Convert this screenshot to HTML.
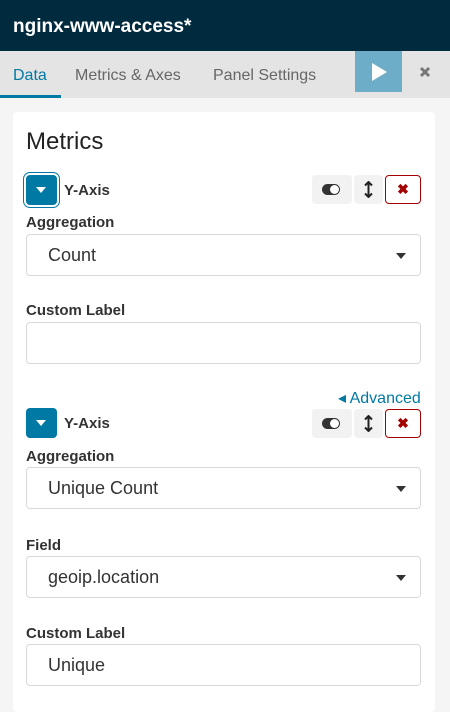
<!DOCTYPE html>
<html><head><style>
*{box-sizing:border-box;margin:0;padding:0}
body{width:450px;height:691px;overflow:hidden;background:#f5f5f5;font-family:"Liberation Sans",sans-serif;position:relative;color:#2d2d2d}
.a{position:absolute}
.hdr{left:0;top:0;width:450px;height:51px;background:#002b3f;color:#fff;font-weight:bold;font-size:19px;padding:16px 0 0 13px}
.tabs{left:0;top:51px;width:450px;height:47px;background:#e4e4e4}
.tab{top:16px;font-size:16px;color:#666}
.panel{left:13px;top:112px;width:422px;height:600px;background:#fff;border-radius:4px}
.lbl{font-weight:bold;font-size:15px;color:#333;left:26px}
.sel{left:26px;width:395px;height:42px;border:1px solid #d9d9d9;border-radius:4px;font-size:18px;padding:10px 0 0 21px;color:#333}
.sel.c:after{content:"";position:absolute;right:14px;top:18px;border:5px solid transparent;border-top:6px solid #333;border-bottom:0}
.tog{width:31px;height:30px;background:#0079a5;border-radius:4px}
.tog:after{content:"";position:absolute;left:10px;top:12px;border:5px solid transparent;border-top:6px solid #fff;border-bottom:0}
.b{height:29px;background:#f2f2f2;border-radius:4px}
.sw{left:10px;top:9px;width:18px;height:11px;border-radius:6px;background:#333}
.sw:after{content:"";position:absolute;right:1px;top:1px;width:9px;height:9px;border-radius:50%;background:#fff}
.x{background:#fff;border:1px solid #a30000;color:#a30000;font-weight:bold;font-size:14px;text-align:center;line-height:27px}
</style></head><body>
<div class="a hdr">nginx-www-access*</div>
<div class="a tabs">
<div class="a tab" style="left:13px;color:#0079a5">Data</div>
<div class="a" style="left:0;top:44px;width:61px;height:3px;background:#0079a5"></div>
<div class="a tab" style="left:75px">Metrics &amp; Axes</div>
<div class="a tab" style="left:213px">Panel Settings</div>
<div class="a" style="left:355px;top:0;width:47px;height:41px;background:#6eadc8"><div class="a" style="left:17px;top:12px;border-left:15px solid #fff;border-top:9px solid transparent;border-bottom:9px solid transparent"></div></div>
<svg class="a" style="left:419px;top:15px" width="12" height="12" viewBox="0 0 12 12"><path d="M2 2L10 10M10 2L2 10" stroke="#777" stroke-width="3"/></svg>
</div>
<div class="a panel"></div>
<div class="a" style="left:26px;top:128px;font-size:24px;color:#222">Metrics</div>

<div class="a tog" style="left:26px;top:175px;box-shadow:0 0 0 2px #fff,0 0 0 3px #0079a5"></div>
<div class="a lbl" style="left:64px;top:182px">Y-Axis</div>
<div class="a b" style="left:312px;top:175px;width:40px"><div class="a sw"></div></div>
<div class="a b" style="left:354px;top:175px;width:29px"><svg class="a" style="left:10px;top:6px" width="9" height="17" viewBox="0 0 9 17"><path d="M4.5 1V16M1 4.5L4.5 1L8 4.5M1 12.5L4.5 16L8 12.5" stroke="#222" stroke-width="2" fill="none"/></svg></div>
<div class="a b x" style="left:385px;top:175px;width:36px">✖</div>
<div class="a lbl" style="top:214px">Aggregation</div>
<div class="a sel c" style="top:234px">Count</div>
<div class="a lbl" style="top:302px">Custom Label</div>
<div class="a sel" style="top:322px"></div>
<div class="a" style="left:338px;top:388px;font-size:16px;color:#0079a5">◂ Advanced</div>

<div class="a tog" style="left:26px;top:408px"></div>
<div class="a lbl" style="left:64px;top:415px">Y-Axis</div>
<div class="a b" style="left:312px;top:409px;width:40px"><div class="a sw"></div></div>
<div class="a b" style="left:354px;top:409px;width:29px"><svg class="a" style="left:10px;top:6px" width="9" height="17" viewBox="0 0 9 17"><path d="M4.5 1V16M1 4.5L4.5 1L8 4.5M1 12.5L4.5 16L8 12.5" stroke="#222" stroke-width="2" fill="none"/></svg></div>
<div class="a b x" style="left:385px;top:409px;width:36px">✖</div>
<div class="a lbl" style="top:448px">Aggregation</div>
<div class="a sel c" style="top:467px">Unique Count</div>
<div class="a lbl" style="top:537px">Field</div>
<div class="a sel c" style="top:556px">geoip.location</div>
<div class="a lbl" style="top:625px">Custom Label</div>
<div class="a sel" style="top:644px">Unique</div>
</body></html>
